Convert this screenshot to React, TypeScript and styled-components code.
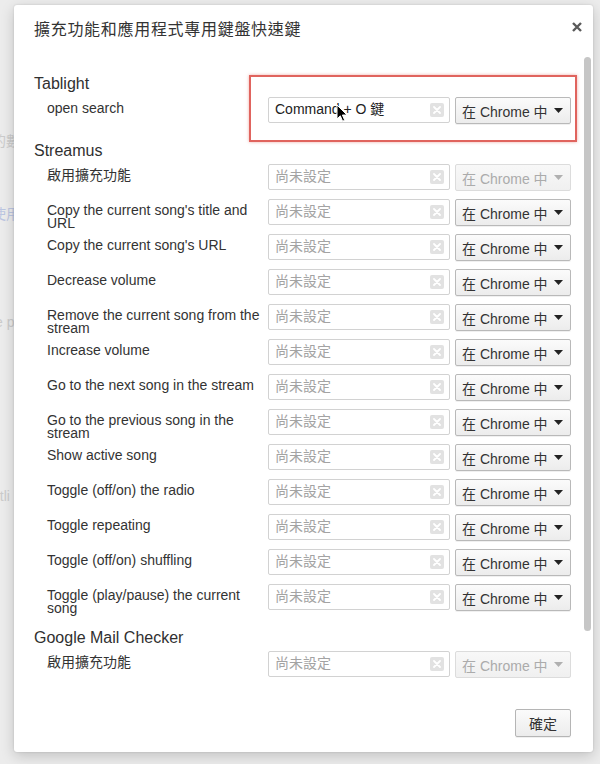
import React from "react";
import styled, { createGlobalStyle } from "styled-components";

const GlobalStyle = createGlobalStyle`
  html, body { margin: 0; padding: 0; }
  body {
    background: #ececec;
    font-family: "Liberation Sans", Arial, "Noto Sans CJK TC", sans-serif;
    -webkit-font-smoothing: antialiased;
  }
`;

const FONT = `"Liberation Sans", Arial, "Noto Sans CJK TC", sans-serif`;

const Page = styled.div`
  position: relative;
  width: 600px;
  height: 764px;
  overflow: hidden;
  background: #ececec;
`;

const BackgroundText = styled.div`
  display: flex;
  flex-direction: column;
  padding-top: 132px;
  margin-left: -8px;
  font-family: ${FONT};
  font-size: 14px;
  color: #c9c9c9;
`;

const BgLine = styled.div<{ $gap: number; $blue?: boolean }>`
  margin-top: ${(p) => p.$gap}px;
  height: 18px;
  line-height: 18px;
  color: ${(p) => (p.$blue ? "#bcc6e2" : "#cbcbcb")};
  white-space: nowrap;
`;

const Dialog = styled.div`
  position: absolute;
  left: 14px;
  top: 5px;
  width: 579px;
  height: 747px;
  box-sizing: border-box;
  background: #fff;
  border-radius: 3px;
  box-shadow: 0 0 2px rgba(0, 0, 0, 0.15), 0 4px 14px rgba(0, 0, 0, 0.18);
  padding: 15px 20px;
  display: flex;
  flex-direction: column;
  font-family: ${FONT};
  color: #303030;
`;

const Title = styled.h1`
  margin: 0;
  font-size: 16px;
  line-height: 20px;
  font-weight: normal;
  letter-spacing: 0.7px;
  color: #333;
`;

const CloseButton = styled.div`
  position: absolute;
  right: 11px;
  top: 13px;
  width: 10px;
  height: 10px;
`;

const ScrollThumb = styled.div`
  position: absolute;
  left: 570px;
  top: 52px;
  width: 7px;
  height: 574px;
  border-radius: 4px;
  background: #c6c6c6;
`;

const Highlight = styled.div`
  position: absolute;
  left: 235px;
  top: 70px;
  width: 328px;
  height: 67px;
  box-sizing: border-box;
  border: 2px solid #e0645e;
  box-shadow: 0 0 3px rgba(224, 100, 94, 0.55);
`;

const Content = styled.div`
  padding-top: 25px;
  display: flex;
  flex-direction: column;
`;

const ExtensionName = styled.div`
  margin-top: 9px;
  margin-bottom: 3px;
  font-size: 16px;
  line-height: 20px;
  color: #303030;
`;

const Row = styled.div`
  display: flex;
  align-items: flex-start;
  height: 35px;
`;

const Label = styled.div`
  box-sizing: border-box;
  width: 234px;
  padding: 5px 2px 0 13px;
  font-size: 14px;
  line-height: 13px;
  color: #333;
`;

const KeyInput = styled.div`
  position: relative;
  box-sizing: border-box;
  width: 182px;
  height: 26px;
  border: 1px solid #d2d2d2;
  border-radius: 2px;
  background: #fff;
  display: flex;
  align-items: center;
  justify-content: space-between;
  padding: 0 5px 0 6px;
`;

const KeyText = styled.span<{ $set?: boolean }>`
  font-size: 14px;
  line-height: 16px;
  margin-top: -2px;
  color: ${(p) => (p.$set ? "#222" : "#a3a3a3")};
  white-space: nowrap;
`;

const ClearBox = styled.span`
  width: 14px;
  height: 14px;
  border-radius: 2px;
  background: #e2e2e2;
  display: flex;
  align-items: center;
  justify-content: center;
`;

const Cursor = styled.svg`
  position: absolute;
  left: 67px;
  top: 6px;
`;

const ScopeButton = styled.div<{ $disabled?: boolean }>`
  box-sizing: border-box;
  margin-left: 5px;
  width: 116px;
  height: 27px;
  border: 1px solid ${(p) => (p.$disabled ? "#dcdcdc" : "#b9b9b9")};
  border-radius: 2px;
  background: ${(p) =>
    p.$disabled
      ? "linear-gradient(#f8f8f8, #f0f0f0)"
      : "linear-gradient(#fbfbfb, #ececec)"};
  box-shadow: ${(p) => (p.$disabled ? "none" : "0 1px 0 rgba(0,0,0,0.06)")};
  display: flex;
  align-items: center;
  justify-content: space-between;
  padding: 0 7px 0 6px;
  font-size: 14px;
  color: ${(p) => (p.$disabled ? "#ababab" : "#333")};
`;

const Footer = styled.div`
  margin-top: 23px;
  display: flex;
  justify-content: flex-end;
  padding-right: 2px;
`;

const OkButton = styled.div`
  box-sizing: border-box;
  width: 56px;
  height: 28px;
  border: 1px solid #b5b5b5;
  border-radius: 2px;
  background: linear-gradient(#fbfbfb, #ececec);
  box-shadow: 0 1px 0 rgba(0, 0, 0, 0.06);
  display: flex;
  align-items: center;
  justify-content: center;
  font-size: 14px;
  color: #333;
`;

const ClearIcon = () => (
  <ClearBox>
    <svg width="8" height="8" viewBox="0 0 8 8">
      <path d="M1 1 L7 7 M7 1 L1 7" stroke="#fff" strokeWidth="1.8" strokeLinecap="round" />
    </svg>
  </ClearBox>
);

const Arrow = ({ color }: { color: string }) => (
  <svg width="9" height="5" viewBox="0 0 9 5">
    <path d="M0 0 H9 L4.5 5 Z" fill={color} />
  </svg>
);

type Cmd = { label: string; value?: string; disabled?: boolean; cursor?: boolean };
type Ext = { name: string; commands: Cmd[] };

const data: Ext[] = [
  { name: "Tablight", commands: [{ label: "open search", value: "Command + O 鍵", cursor: true }] },
  {
    name: "Streamus",
    commands: [
      { label: "啟用擴充功能", disabled: true },
      { label: "Copy the current song's title and URL" },
      { label: "Copy the current song's URL" },
      { label: "Decrease volume" },
      { label: "Remove the current song from the stream" },
      { label: "Increase volume" },
      { label: "Go to the next song in the stream" },
      { label: "Go to the previous song in the stream" },
      { label: "Show active song" },
      { label: "Toggle (off/on) the radio" },
      { label: "Toggle repeating" },
      { label: "Toggle (off/on) shuffling" },
      { label: "Toggle (play/pause) the current song" },
    ],
  },
  { name: "Google Mail Checker", commands: [{ label: "啟用擴充功能", disabled: true }] },
];

const CommandRow = ({ cmd }: { cmd: Cmd }) => (
  <Row>
    <Label>{cmd.label}</Label>
    <KeyInput>
      <KeyText $set={!!cmd.value}>{cmd.value ?? "尚未設定"}</KeyText>
      <ClearIcon />
      {cmd.cursor && (
        <Cursor width="12" height="19" viewBox="0 0 12 19">
          <path
            d="M1 1 L1 15 L4.3 11.8 L6.6 17.2 L8.7 16.3 L6.4 11 L11 11 Z"
            fill="#000"
            stroke="#fff"
            strokeWidth="1"
            strokeLinejoin="round"
          />
        </Cursor>
      )}
    </KeyInput>
    <ScopeButton $disabled={cmd.disabled}>
      <span>在 Chrome 中</span>
      <Arrow color={cmd.disabled ? "#b0b0b0" : "#222"} />
    </ScopeButton>
  </Row>
);

export default function App() {
  return (
    <>
      <GlobalStyle />
      <Page>
        <BackgroundText>
          <BgLine $gap={0}>的數</BgLine>
          <BgLine $gap={55} $blue>使用</BgLine>
          <BgLine $gap={90}>le p</BgLine>
          <BgLine $gap={156}>otli</BgLine>
        </BackgroundText>
        <Dialog>
          <Title>擴充功能和應用程式專用鍵盤快速鍵</Title>
          <CloseButton>
            <svg width="10" height="10" viewBox="0 0 10 10">
              <path d="M1 1 L9 9 M9 1 L1 9" stroke="#5a5a5a" strokeWidth="2.4" />
            </svg>
          </CloseButton>
          <ScrollThumb />
          <Highlight />
          <Content>
            {data.map((ext) => (
              <React.Fragment key={ext.name}>
                <ExtensionName>{ext.name}</ExtensionName>
                {ext.commands.map((c, i) => (
                  <CommandRow key={i} cmd={c} />
                ))}
              </React.Fragment>
            ))}
          </Content>
          <Footer>
            <OkButton>確定</OkButton>
          </Footer>
        </Dialog>
      </Page>
    </>
  );
}
